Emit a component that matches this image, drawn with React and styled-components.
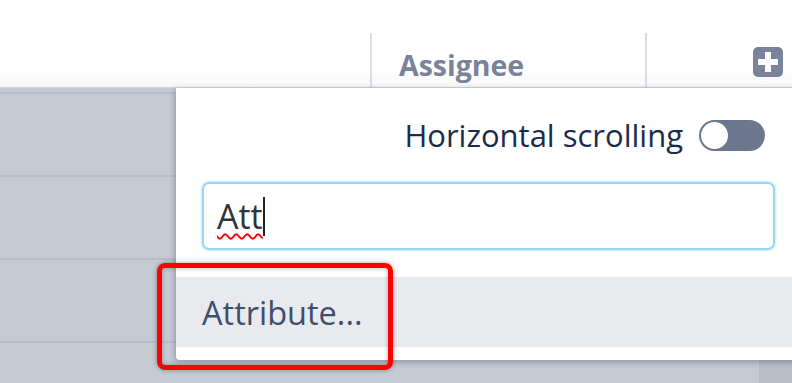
import React from 'react';
import styled, { createGlobalStyle } from 'styled-components';

const GlobalStyle = createGlobalStyle`
  html, body {
    margin: 0;
    padding: 0;
    background: #fff;
    overflow: hidden;
  }
  body {
    font-family: "Open Sans", "Noto Sans", sans-serif;
  }
`;

const Page = styled.div`
  position: relative;
  width: 792px;
  height: 383px;
  overflow: hidden;
`;

const Header = styled.div`
  display: grid;
  grid-template-columns: 370px 275px 1fr;
  height: 88px;
  box-sizing: border-box;
  padding-top: 33px;
  border-bottom: 1px solid #cfd1d6;
  background: linear-gradient(#fff 80%, #f7f7f8);
`;

const HeaderCell = styled.div`
  display: flex;
  align-items: flex-end;
  justify-content: ${p => (p.$end ? 'flex-end' : 'flex-start')};
  box-sizing: border-box;
  padding: 0 9px 8px 27px;
  border-left: ${p => (p.$first ? 'none' : '2px solid #dcdde0')};
  color: #7a8399;
  font-weight: 700;
  font-size: 28.5px;
  line-height: 1;
`;

const PlusButton = styled.div`
  width: 30px;
  height: 30px;
  border-radius: 5px;
  background: #7a8399;
  display: flex;
  align-items: center;
  justify-content: center;
  margin-bottom: 2px;
`;

const Body = styled.div`
  background: #c5cad3;
  height: 295px;
  padding-top: 4px;
  box-sizing: border-box;
`;

const Row = styled.div`
  height: 83px;
  box-sizing: border-box;
  border-top: 2px solid #b8bdc7;
  display: flex;
  align-items: flex-end;
  padding-left: 395px;
`;

const Assignee = styled.span`
  color: #0b4fc7;
  font-size: 30px;
  line-height: 1;
  transform: translateY(26px);
`;

const Scrollbar = styled.div`
  position: absolute;
  right: 0;
  bottom: 0;
  width: 33px;
  height: 23px;
  background: #b9bec8;
`;

const Panel = styled.div`
  position: absolute;
  left: 176px;
  top: 88px;
  width: 640px;
  height: 272px;
  background: #fff;
  border-radius: 0 0 4px 4px;
  box-shadow: -1px 2px 6px rgba(40, 50, 70, 0.35);
  display: flex;
  flex-direction: column;
`;

const ToggleRow = styled.label`
  display: flex;
  align-items: center;
  justify-content: flex-end;
  gap: 16px;
  height: 94px;
  padding-right: 51px;
  color: #1b2b4d;
  font-size: 31px;
`;

const Toggle = styled.div`
  width: 66px;
  height: 31px;
  border-radius: 16px;
  background: #6b778c;
  box-sizing: border-box;
  padding: 2px;
  flex-shrink: 0;
`;

const Knob = styled.div`
  width: 27px;
  height: 27px;
  border-radius: 50%;
  background: #fff;
`;

const SearchWrap = styled.div`
  padding: 0 41px 0 26px;
`;

const SearchBox = styled.div`
  height: 68px;
  box-sizing: border-box;
  border: 2px solid #99d5fb;
  border-radius: 7px;
  box-shadow: 0 0 3px rgba(120, 200, 250, 0.8);
  display: flex;
  align-items: center;
  padding-left: 13px;
  font-size: 34px;
  color: #333;
`;

const Misspelled = styled.span`
  text-decoration: underline wavy #f00;
  text-decoration-thickness: 1.5px;
  text-underline-offset: 4px;
`;

const Caret = styled.span`
  display: inline-block;
  width: 2px;
  height: 39px;
  background: #222;
`;

const Option = styled.div`
  margin-top: 27px;
  height: 70px;
  background: #e9eaee;
  display: flex;
  align-items: center;
  padding-left: 26px;
  color: #3e4e6c;
  font-size: 32.5px;
`;

const Highlight = styled.div`
  position: absolute;
  left: 157px;
  top: 263px;
  width: 236px;
  height: 107px;
  box-sizing: border-box;
  border: 5px solid #ff0000;
  border-radius: 8px;
  box-shadow: 0 0 5px rgba(0, 0, 0, 0.35), inset 0 0 5px rgba(0, 0, 0, 0.3);
`;

const PlusIcon = () => (
  <svg width="22" height="22" viewBox="0 0 22 22">
    <rect x="8" y="1" width="6" height="20" fill="#fff" />
    <rect x="1" y="8" width="20" height="6" fill="#fff" />
  </svg>
);

export default function App() {
  return (
    <>
      <GlobalStyle />
      <Page>
        <Header>
          <HeaderCell $first />
          <HeaderCell>Assignee</HeaderCell>
          <HeaderCell $end>
            <PlusButton>
              <PlusIcon />
            </PlusButton>
          </HeaderCell>
        </Header>
        <Body>
          <Row />
          <Row />
          <Row />
          <Row>
            <Assignee>Bob</Assignee>
          </Row>
        </Body>
        <Scrollbar />
        <Panel>
          <ToggleRow>
            Horizontal scrolling
            <Toggle>
              <Knob />
            </Toggle>
          </ToggleRow>
          <SearchWrap>
            <SearchBox>
              <Misspelled>Att</Misspelled>
              <Caret />
            </SearchBox>
          </SearchWrap>
          <Option>Attribute...</Option>
        </Panel>
        <Highlight />
      </Page>
    </>
  );
}
